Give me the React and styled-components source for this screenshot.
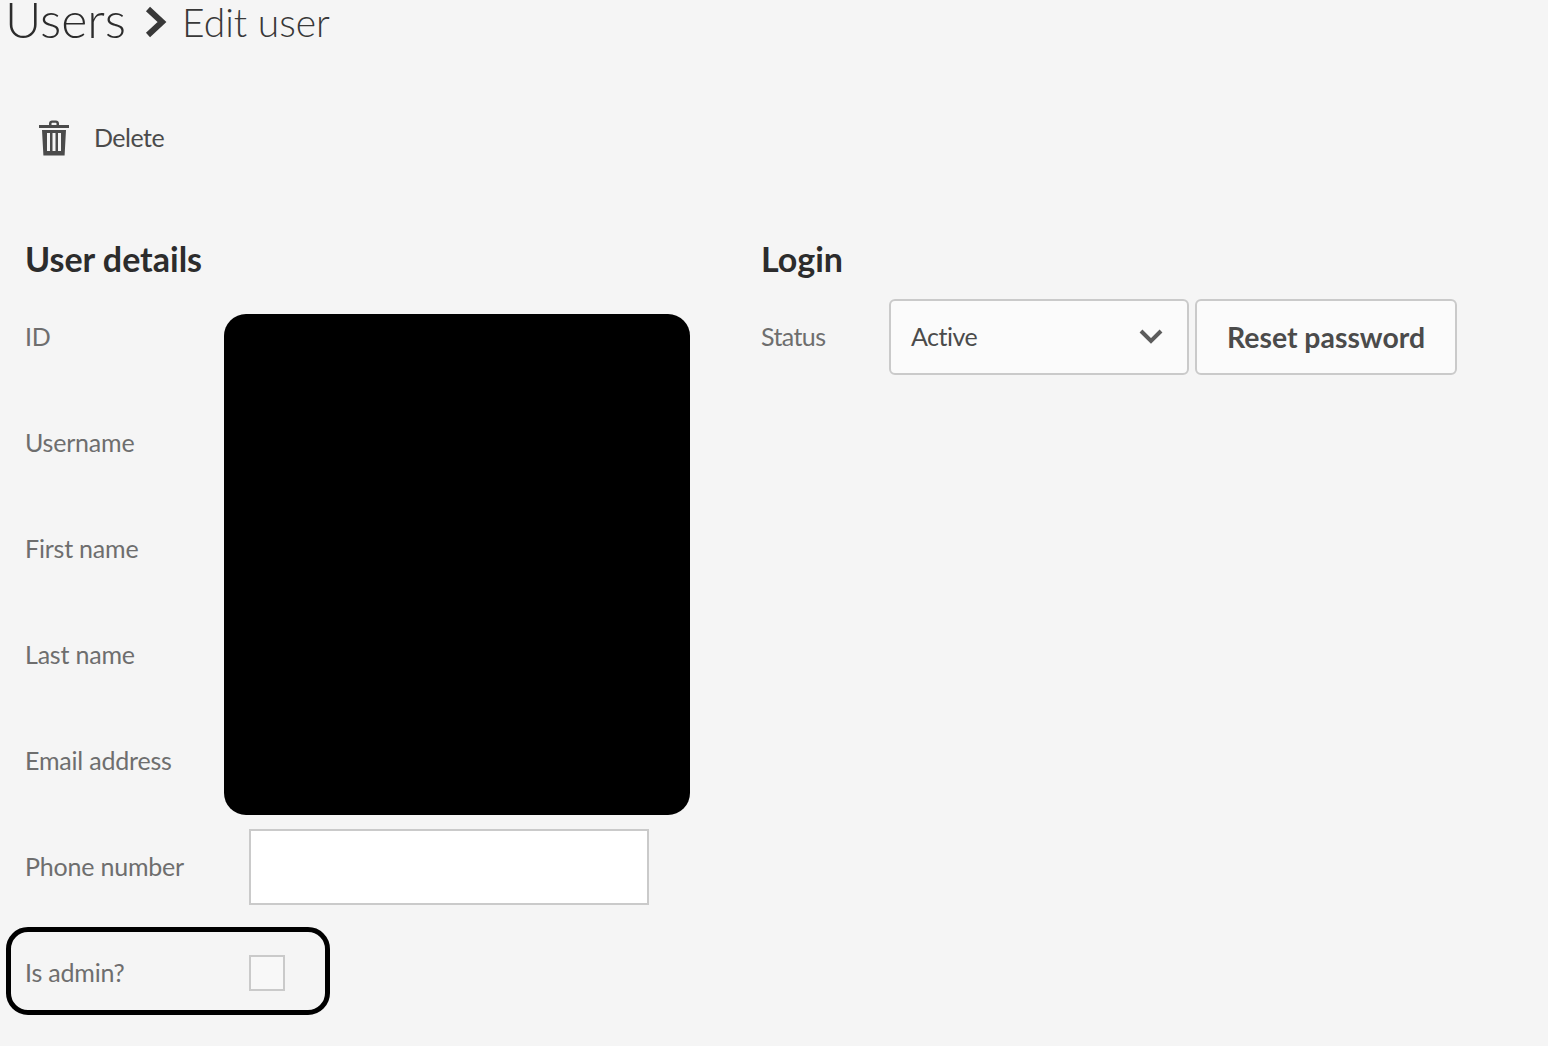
import React from 'react';
import styled, { createGlobalStyle } from 'styled-components';

const GlobalStyle = createGlobalStyle`
    html, body {
        margin: 0;
        height: 100%;
        background: #f5f5f5;
        overflow: hidden;
    }
    body {
        font-family: "Lato", "Open Sans", sans-serif;
        color: #6e6e6e;
    }
`;

const Page = styled.div`
    width: 1548px;
    height: 1046px;
    overflow: hidden;
`;

const Breadcrumb = styled.h1`
    display: flex;
    align-items: center;
    height: 44px;
    margin: 0;
    padding-left: 5px;
    font-weight: 300;
    color: #2c2c2c;
`;

const Root = styled.span`
    font-size: 50px;
    line-height: 36px;
    margin-right: 19px;
    transform: translateY(-3px);
`;

const Current = styled.span`
    font-size: 39px;
    line-height: 44px;
    margin-left: 15px;
    color: #383838;
`;

const Toolbar = styled.div`
    display: flex;
    align-items: center;
    gap: 25px;
    margin-top: 76px;
    padding-left: 39px;
    height: 36px;
    font-size: 25px;
    letter-spacing: -0.5px;
    color: #4b4b4b;
`;

const DeleteText = styled.span`
    padding-bottom: 3px;
`;

const Columns = styled.div`
    display: grid;
    grid-template-columns: 736px 1fr;
    margin-top: 78px;
    padding-left: 25px;
`;

const Heading = styled.h2`
    margin: 0 0 15px;
    height: 50px;
    line-height: 50px;
    font-size: 34px;
    font-weight: 700;
    color: #2c2c2c;
`;

const Form = styled.div`
    position: relative;
`;

const Row = styled.div`
    display: grid;
    grid-template-columns: 224px 400px;
    align-items: center;
    height: 76px;
    margin-bottom: 30px;
`;

const Label = styled.label`
    padding-bottom: 2px;
    font-size: 25px;
    letter-spacing: -0.2px;
    color: #6e6e6e;
`;

const TextInput = styled.input`
    box-sizing: border-box;
    width: 400px;
    height: 76px;
    border: 2px solid #cacaca;
    background: #fff;
    outline: none;
`;

const Checkbox = styled.span`
    box-sizing: border-box;
    display: block;
    width: 36px;
    height: 36px;
    border: 2px solid #cacaca;
    background: #f8f8f8;
`;

const Redaction = styled.div`
    position: absolute;
    left: 199px;
    top: 15px;
    width: 466px;
    height: 501px;
    background: #000;
    border-radius: 22px;
`;

const Highlight = styled.div`
    position: absolute;
    left: -19px;
    top: 628px;
    box-sizing: border-box;
    width: 324px;
    height: 88px;
    border: 5px solid #000;
    border-radius: 22px;
`;

const LoginRow = styled.div`
    display: flex;
    align-items: center;
    height: 76px;
`;

const StatusLabel = styled(Label)`
    width: 128px;
    letter-spacing: -0.6px;
`;

const Select = styled.div`
    box-sizing: border-box;
    display: flex;
    align-items: center;
    justify-content: space-between;
    width: 300px;
    height: 76px;
    padding: 0 24px 2px 20px;
    margin-right: 6px;
    border: 2px solid #cacaca;
    border-radius: 6px;
    background: #fbfbfb;
    font-size: 25px;
    letter-spacing: -0.5px;
    color: #4b4b4b;
`;

const Button = styled.button`
    box-sizing: border-box;
    width: 262px;
    height: 76px;
    padding: 0;
    border: 2px solid #cacaca;
    border-radius: 6px;
    background: #fbfbfb;
    font-family: inherit;
    font-size: 28.4px;
    font-weight: 700;
    color: #4b4b4b;
`;

const TrashIcon = () => (
    <svg width="30" height="36" viewBox="0 0 30 36" fill="#4b4b4b">
        <path d="M10 5V3.5C10 1.6 11.4 0.5 13 0.5H17C18.6 0.5 20 1.6 20 3.5V5H30V8H0V5ZM12.5 5H17.5V3.5C17.5 3 17.2 2.8 16.8 2.8H13.2C12.8 2.8 12.5 3 12.5 3.5Z" fillRule="evenodd" />
        <path d="M3 10H27L25.6 35.5H4.4ZM8 13V31H11V13ZM13.5 13V31H16.5V13ZM19 13V31H22V13Z" fillRule="evenodd" />
    </svg>
);

const ChevronRight = () => (
    <svg width="22" height="32" viewBox="0 0 22 32" fill="none" stroke="#383838" strokeWidth="6">
        <path d="M3 3L17 16L3 29" />
    </svg>
);

const ChevronDown = () => (
    <svg width="24" height="15" viewBox="0 0 24 15" fill="none" stroke="#5c5c5c" strokeWidth="4">
        <path d="M2 2L12 12L22 2" />
    </svg>
);

// the values of these fields are blacked out in the picture
const redactedFields = ['ID', 'Username', 'First name', 'Last name', 'Email address'];

export default function App() {
    return (
        <Page>
            <GlobalStyle />
            <Breadcrumb>
                <Root>Users</Root>
                <ChevronRight />
                <Current>Edit user</Current>
            </Breadcrumb>
            <Toolbar>
                <TrashIcon />
                <DeleteText>Delete</DeleteText>
            </Toolbar>
            <Columns>
                <section>
                    <Heading>User details</Heading>
                    <Form>
                        {redactedFields.map((name) => (
                            <Row key={name}>
                                <Label>{name}</Label>
                            </Row>
                        ))}
                        <Row>
                            <Label>Phone number</Label>
                            <TextInput />
                        </Row>
                        <Row>
                            <Label>Is admin?</Label>
                            <Checkbox />
                        </Row>
                        <Redaction />
                        <Highlight />
                    </Form>
                </section>
                <section>
                    <Heading>Login</Heading>
                    <LoginRow>
                        <StatusLabel>Status</StatusLabel>
                        <Select>
                            Active
                            <ChevronDown />
                        </Select>
                        <Button>Reset password</Button>
                    </LoginRow>
                </section>
            </Columns>
        </Page>
    );
}
